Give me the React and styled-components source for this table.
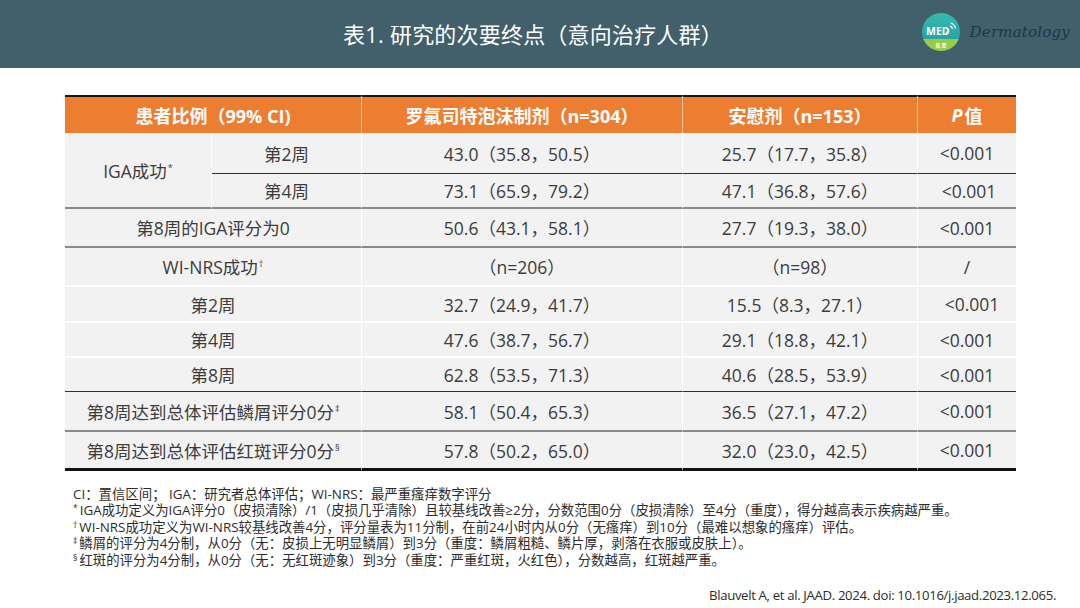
import React from "react";
import styled, { createGlobalStyle, css } from "styled-components";

const Global = createGlobalStyle`
  html, body { margin: 0; padding: 0; background: #ffffff; }
  body { width: 1080px; height: 608px; overflow: hidden; font-family: "Open Sans", "Noto Sans CJK SC", sans-serif; }
`;

const Page = styled.div`
  width: 1080px;
  height: 608px;
  display: flex;
  flex-direction: column;
  background: #fff;
`;

const TopBar = styled.header`
  height: 68px;
  background: #41606b;
  display: grid;
  grid-template-columns: 1fr auto 1fr;
  align-items: center;
`;

const Title = styled.h1`
  grid-column: 2;
  margin: 0 14px 0 0;
  color: #ffffff;
  font-family: "Open Sans", "Noto Sans CJK SC", sans-serif;
  font-weight: 400;
  font-size: 22px;
  letter-spacing: 0.2px;
  padding-bottom: 2px;
`;

const Brand = styled.div`
  grid-column: 3;
  justify-self: end;
  display: flex;
  align-items: center;
  gap: 9px;
  padding-right: 10px;
  padding-bottom: 4px;
`;

const BrandName = styled.span`
  font-family: "DejaVu Serif", "Liberation Serif", serif;
  font-style: italic;
  font-size: 15px;
  color: #1d3550;
  letter-spacing: 0.2px;
`;

const TableGrid = styled.div`
  margin: 27px 0 0 65px;
  width: 951px;
  display: grid;
  grid-template-columns: 147px 150px 321px 235px 98px;
  grid-template-rows: 38px 41px 35px 39px 39px 36px 35px 34px 40px 39px;
  font-size: 17.5px;
  color: #3c3c3c;
`;

const HeadCell = styled.div`
  grid-column: ${(p) => p.$col};
  background: #ed7d31;
  border-top: 2px solid #151515;
  border-right: ${(p) => (p.$last ? "none" : "1px solid #f6c7a6")};
  color: #ffffff;
  font-weight: 700;
  font-size: 18px;
  display: flex;
  align-items: center;
  justify-content: center;
  box-sizing: border-box;
  padding-bottom: 1px;
`;

const lineStyles = {
  dark: css`border-bottom: 1px solid #2f2f2f;`,
  gray: css`border-bottom: 2px solid #8a8a8a;`,
  white: css`border-bottom: 2px solid #ffffff;`,
  black: css`border-bottom: 3px solid #111111;`,
};

const Cell = styled.div`
  grid-column: ${(p) => p.$col};
  grid-row: ${(p) => p.$row};
  background: #f2f2f2;
  border-right: ${(p) => (p.$last ? "none" : "1px solid #ffffff")};
  ${(p) => lineStyles[p.$line]}
  display: flex;
  align-items: center;
  justify-content: center;
  box-sizing: border-box;
  white-space: nowrap;
  padding-left: ${(p) => p.$shift || 0}px;
`;

const Sup = styled.sup`
  font-size: 9px;
  vertical-align: top;
  position: relative;
  top: -3px;
  margin-left: 1px;
`;

const Italic = styled.i`
  font-style: italic;
  margin-right: 2px;
`;

const Notes = styled.div`
  margin: 15px 0 0 73px;
  font-size: 13.4px;
  line-height: 16.4px;
  color: #2c2c2c;
`;

const NoteLine = styled.div`
  white-space: nowrap;
`;

const Mark = styled.sup`
  font-size: 8.5px;
  vertical-align: top;
  position: relative;
  top: -2px;
  margin-right: 2px;
`;

const Citation = styled.div`
  margin-top: 18px;
  align-self: flex-end;
  padding-right: 24px;
  font-size: 13.2px;
  color: #2c2c2c;
  white-space: nowrap;
  letter-spacing: -0.35px;
`;

function Logo() {
  return (
    <svg width="40" height="40" viewBox="0 0 40 40">
      <defs>
        <linearGradient id="lg" x1="0" y1="0" x2="0" y2="1">
          <stop offset="0" stopColor="#36b9ad" />
          <stop offset="1" stopColor="#1f9aa3" />
        </linearGradient>
        <clipPath id="cc">
          <circle cx="20" cy="20" r="19" />
        </clipPath>
      </defs>
      <circle cx="20" cy="20" r="19" fill="url(#lg)" />
      <rect x="0" y="27" width="40" height="14" fill="#9acb45" clipPath="url(#cc)" />
      <text x="5" y="23" fill="#fff" fontSize="10.5" fontWeight="700" fontFamily="Open Sans, sans-serif">MED</text>
      <path d="M25.2 19.2 L27.6 20.8 L25.2 22.4 Z" fill="#fff" />
      <path d="M29 14 a4 4 0 0 1 2.5 3" stroke="#fff" strokeWidth="1.2" fill="none" />
      <path d="M29.5 11 a7 7 0 0 1 5 5.5" stroke="#fff" strokeWidth="1.2" fill="none" />
      <text x="20" y="35" fill="#fff" fontSize="5" fontWeight="700" textAnchor="middle" fontFamily="Noto Sans CJK SC, sans-serif">拓 普</text>
    </svg>
  );
}

const rows = [
  { h: "第8周的IGA评分为0", a: "50.6（43.1，58.1）", b: "27.7（19.3，38.0）", p: "<0.001", line: "gray" },
  { h: "WI-NRS成功", sup: "†", a: "（n=206）", b: "（n=98）", p: "/", line: "white" },
  { h: "第2周", a: "32.7（24.9，41.7）", b: "15.5（8.3，27.1）", p: "<0.001", line: "white", pShift: 10 },
  { h: "第4周", a: "47.6（38.7，56.7）", b: "29.1（18.8，42.1）", p: "<0.001", line: "white" },
  { h: "第8周", a: "62.8（53.5，71.3）", b: "40.6（28.5，53.9）", p: "<0.001", line: "dark" },
  { h: "第8周达到总体评估鳞屑评分0分", sup: "‡", a: "58.1（50.4，65.3）", b: "36.5（27.1，47.2）", p: "<0.001", line: "gray" },
  { h: "第8周达到总体评估红斑评分0分", sup: "§", a: "57.8（50.2，65.0）", b: "32.0（23.0，42.5）", p: "<0.001", line: "black" },
];

export default function App() {
  return (
    <Page>
      <Global />
      <TopBar>
        <Title>表1. 研究的次要终点（意向治疗人群）</Title>
        <Brand>
          <Logo />
          <BrandName>Dermatology</BrandName>
        </Brand>
      </TopBar>

      <TableGrid>
        <HeadCell $col="1 / span 2">患者比例（99% CI)</HeadCell>
        <HeadCell $col="3">罗氟司特泡沫制剂（n=304）</HeadCell>
        <HeadCell $col="4">安慰剂（n=153）</HeadCell>
        <HeadCell $col="5" $last>
          <Italic>P</Italic>值
        </HeadCell>

        <Cell $col="1" $row="2 / span 2" $line="gray">
          IGA成功<Sup>*</Sup>
        </Cell>
        <Cell $col="2" $row="2" $line="dark">第2周</Cell>
        <Cell $col="3" $row="2" $line="dark">43.0（35.8，50.5）</Cell>
        <Cell $col="4" $row="2" $line="dark">25.7（17.7，35.8）</Cell>
        <Cell $col="5" $row="2" $line="dark" $last>&lt;0.001</Cell>
        <Cell $col="2" $row="3" $line="gray">第4周</Cell>
        <Cell $col="3" $row="3" $line="gray">73.1（65.9，79.2）</Cell>
        <Cell $col="4" $row="3" $line="gray">47.1（36.8，57.6）</Cell>
        <Cell $col="5" $row="3" $line="gray" $last $shift={4}>&lt;0.001</Cell>

        {rows.map((r, i) => (
          <React.Fragment key={i}>
            <Cell $col="1 / span 2" $row={i + 4} $line={r.line}>
              {r.h}
              {r.sup && <Sup>{r.sup}</Sup>}
            </Cell>
            <Cell $col="3" $row={i + 4} $line={r.line}>{r.a}</Cell>
            <Cell $col="4" $row={i + 4} $line={r.line}>{r.b}</Cell>
            <Cell $col="5" $row={i + 4} $line={r.line} $last $shift={r.pShift}>{r.p}</Cell>
          </React.Fragment>
        ))}
      </TableGrid>

      <Notes>
        <NoteLine>CI：置信区间； IGA：研究者总体评估；WI-NRS：最严重瘙痒数字评分</NoteLine>
        <NoteLine>
          <Mark>*</Mark>IGA成功定义为IGA评分0（皮损清除）/1（皮损几乎清除）且较基线改善≥2分，分数范围0分（皮损清除）至4分（重度），得分越高表示疾病越严重。
        </NoteLine>
        <NoteLine>
          <Mark>†</Mark>WI-NRS成功定义为WI-NRS较基线改善4分，评分量表为11分制，在前24小时内从0分（无瘙痒）到10分（最难以想象的瘙痒）评估。
        </NoteLine>
        <NoteLine>
          <Mark>‡</Mark>鳞屑的评分为4分制，从0分（无：皮损上无明显鳞屑）到3分（重度：鳞屑粗糙、鳞片厚，剥落在衣服或皮肤上）。
        </NoteLine>
        <NoteLine>
          <Mark>§</Mark>红斑的评分为4分制，从0分（无：无红斑迹象）到3分（重度：严重红斑，火红色），分数越高，红斑越严重。
        </NoteLine>
      </Notes>

      <Citation>Blauvelt A, et al. JAAD. 2024. doi: 10.1016/j.jaad.2023.12.065.</Citation>
    </Page>
  );
}
